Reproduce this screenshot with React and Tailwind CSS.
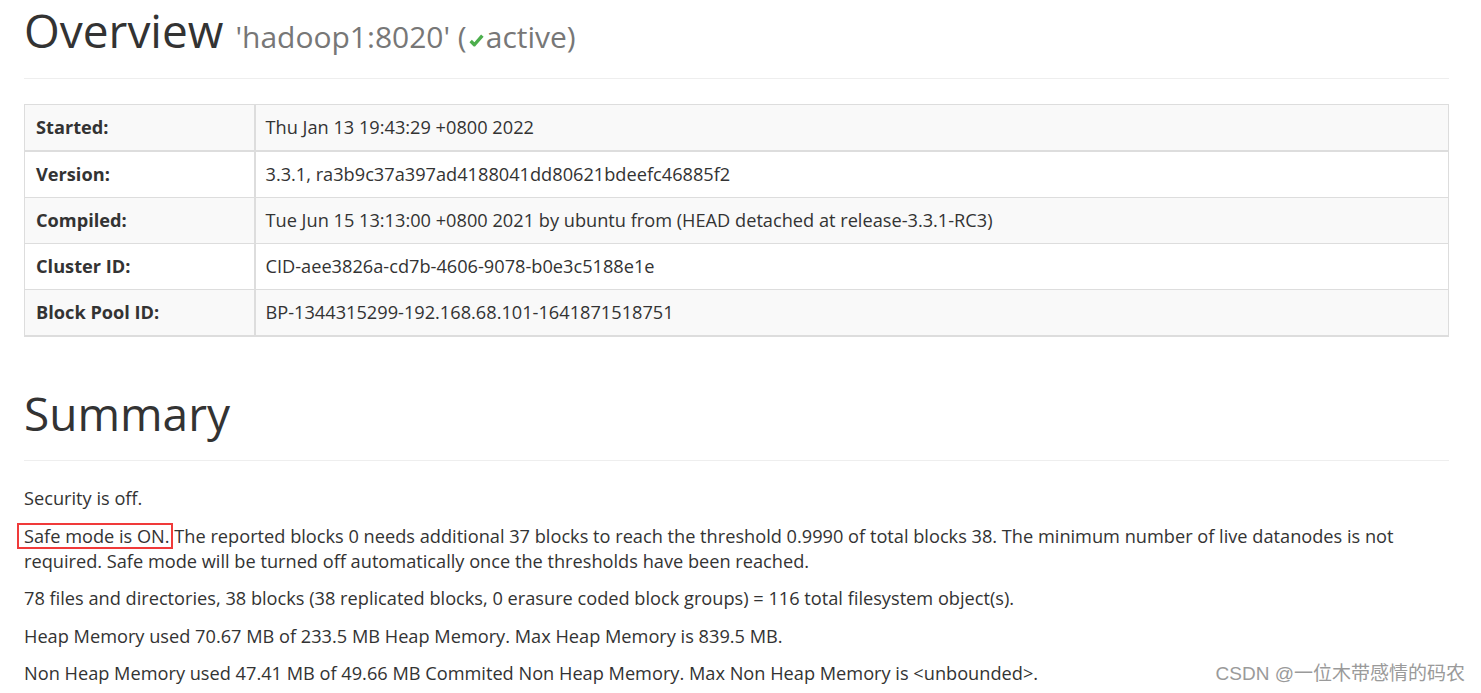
import React from 'react'

const info = [
  ['Started:', 'Thu Jan 13 19:43:29 +0800 2022'],
  ['Version:', '3.3.1, ra3b9c37a397ad4188041dd80621bdeefc46885f2'],
  ['Compiled:', 'Tue Jun 15 13:13:00 +0800 2021 by ubuntu from (HEAD detached at release-3.3.1-RC3)'],
  ['Cluster ID:', 'CID-aee3826a-cd7b-4606-9078-b0e3c5188e1e'],
  ['Block Pool ID:', 'BP-1344315299-192.168.68.101-1641871518751'],
]

function PageHeader({ children, first }) {
  return (
    <div className={`border-b border-[#eee] mb-[25px] ${first ? 'mt-[6px] pb-[16px]' : 'mt-[52px] pb-[22px]'}`}>
      <h1 className="text-[46px] leading-[49.5px] font-normal text-[#333]">{children}</h1>
    </div>
  )
}

function Check() {
  return (
    <svg viewBox="0 0 16 16" className="inline-block w-[17px] h-[17px] align-[-1px] mx-[1px]">
      <path d="M2.5 8.5 L6 12 L13.5 3.5" fill="none" stroke="#4cae4c" strokeWidth="3.2" strokeLinejoin="round" />
    </svg>
  )
}

export default function App() {
  return (
    <div
      className="relative min-h-[693px] bg-white text-[#333] text-[18.2px] leading-[25px] pl-6 pr-8 overflow-hidden"
      style={{ fontFamily: '"Open Sans", "Noto Sans", sans-serif' }}
    >
      <PageHeader first>
        Overview{' '}
        <small className="text-[30px] text-[#777]">
          'hadoop1:8020' (<Check />active)
        </small>
      </PageHeader>

      {/* Info table */}
      <table className="w-full border-collapse border border-[#ddd] mb-[25px]">
        <tbody>
          {info.map(([k, v], i) => (
            <tr
              key={k}
              className={`${i % 2 === 0 ? 'bg-[#f9f9f9]' : 'bg-white'} ${i === 0 ? 'border-b-2' : 'border-b'} border-[#ddd] last:border-b-2`}
            >
              <th className="w-[230px] text-left font-bold px-[11px] py-[10px] border-r-2 border-[#ddd]">{k}</th>
              <td className="px-[10px] py-[10px]">{v}</td>
            </tr>
          ))}
        </tbody>
      </table>

      <PageHeader>Summary</PageHeader>

      <p className="mb-[12.5px]">Security is off.</p>
      <p className="mb-[12.5px]">
        <span className="relative">
          Safe mode is ON.
          <span className="absolute -left-[7px] -right-[3px] -top-[1px] -bottom-[1px] border-2 border-[#f03a3a]" />
        </span>{' '}
        The reported blocks 0 needs additional 37 blocks to reach the threshold 0.9990 of total blocks 38. The minimum number of live datanodes is not required. Safe mode will be turned off automatically once the thresholds have been reached.
      </p>
      <p className="mb-[12.5px]">
        78 files and directories, 38 blocks (38 replicated blocks, 0 erasure coded block groups) = 116 total filesystem object(s).
      </p>
      <p className="mb-[12.5px]">Heap Memory used 70.67 MB of 233.5 MB Heap Memory. Max Heap Memory is 839.5 MB.</p>
      <p className="mb-[12.5px]">
        Non Heap Memory used 47.41 MB of 49.66 MB Commited Non Heap Memory. Max Non Heap Memory is &lt;unbounded&gt;.
      </p>

      <div
        className="absolute right-[16px] bottom-[14px] text-[19px] leading-[22px] text-[#9a9a9a]"
        style={{ fontFamily: '"Liberation Sans", "Noto Sans CJK SC", sans-serif' }}
      >
        CSDN @一位木带感情的码农
      </div>
    </div>
  )
}
